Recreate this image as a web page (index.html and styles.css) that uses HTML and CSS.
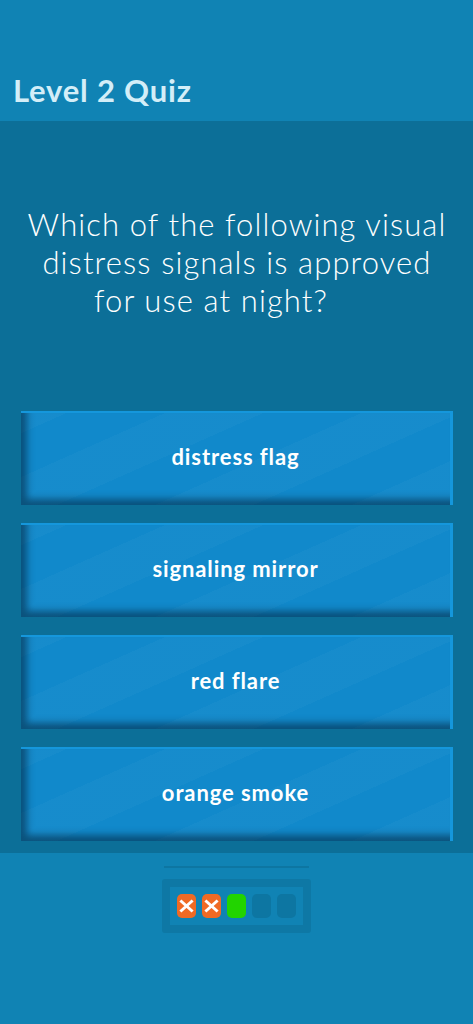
FILE: index.html
```html
<!DOCTYPE html>
<html>
<head>
<meta charset="utf-8">
<link rel="stylesheet" href="styles.css">
</head>
<body>
<header class="topbar">
  <h1 class="title">Level 2 Quiz</h1>
</header>
<main class="quiz">
  <p class="question">Which of the following visual<br>distress signals is approved<br><span class="last-line">for use at night?</span></p>
  <div class="answers">
    <button class="answer">distress flag</button>
    <button class="answer">signaling mirror</button>
    <button class="answer">red flare</button>
    <button class="answer">orange smoke</button>
  </div>
</main>
<footer class="bottom">
  <div class="rule"></div>
  <div class="progress">
    <div class="pip wrong"><svg viewBox="0 0 19 24" width="19" height="24"><path d="M4.5 7.5 L14.5 16.5 M14.5 7.5 L4.5 16.5" stroke="#ffffff" stroke-width="3" stroke-linecap="square" fill="none"/></svg></div>
    <div class="pip wrong"><svg viewBox="0 0 19 24" width="19" height="24"><path d="M4.5 7.5 L14.5 16.5 M14.5 7.5 L4.5 16.5" stroke="#ffffff" stroke-width="3" stroke-linecap="square" fill="none"/></svg></div>
    <div class="pip right"></div>
    <div class="pip"></div>
    <div class="pip"></div>
  </div>
</footer>
</body>
</html>
```
FILE: styles.css
```css
html, body {
  margin: 0;
  padding: 0;
}
body {
  width: 473px;
  height: 1024px;
  background: #1083b4;
  font-family: Lato, "Open Sans", sans-serif;
  display: flex;
  flex-direction: column;
  overflow: hidden;
}
.topbar {
  height: 121px;
  background: #1083b4;
  display: flex;
  align-items: flex-end;
  padding: 0 0 0 13px;
  box-sizing: border-box;
}
.title {
  margin: 0 0 12px 0;
  font-size: 31px;
  font-weight: 700;
  color: #d3eef8;
  letter-spacing: 0.8px;
}
.quiz {
  background: #0c6f98;
  display: flex;
  flex-direction: column;
  padding: 0 20px 12px 21px;
}
.question {
  margin: 84px 0 0 0;
  height: 206px;
  color: #ffffff;
  font-size: 31px;
  font-weight: 300;
  line-height: 38px;
  text-align: center;
  letter-spacing: 1.1px;
}
.last-line {
  padding-right: 52px;
}
.answers {
  display: flex;
  flex-direction: column;
  gap: 18px;
}
.answer {
  height: 94px;
  border: none;
  border-top: 2px solid #1597dc;
  border-right: 3px solid #1597dc;
  padding: 0 0 5px 0;
  margin: 0;
  font-family: Lato, "Open Sans", sans-serif;
  font-size: 22px;
  font-weight: 700;
  color: #ffffff;
  letter-spacing: 0.9px;
  background-color: #1189cb;
  background-image: repeating-linear-gradient(-24deg, rgba(255,255,255,0.025) 0 40px, rgba(255,255,255,0) 40px 80px);
  box-shadow: inset 7px -7px 7px -1px rgba(0, 25, 45, 0.5);
}
.bottom {
  flex: 1;
  background: #1083b4;
  display: flex;
  flex-direction: column;
  align-items: center;
}
.rule {
  margin-top: 13px;
  width: 145px;
  height: 2px;
  background: #0d76a2;
}
.progress {
  margin-top: 11px;
  width: 149px;
  height: 54px;
  box-sizing: border-box;
  border: 8px solid #0e78a5;
  border-radius: 3px;
  display: flex;
  align-items: center;
  padding-left: 7px;
  gap: 6px;
}
.pip {
  width: 19px;
  height: 24px;
  border-radius: 5px;
  background: #0d76a2;
  display: flex;
}
.pip.wrong {
  background: #f06a24;
}
.pip.right {
  background: #22d400;
}
```
